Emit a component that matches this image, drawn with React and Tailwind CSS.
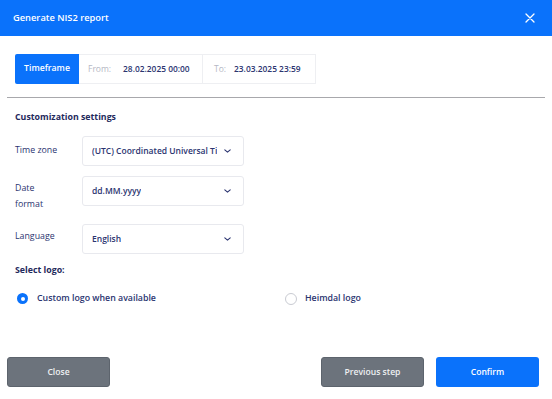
import React from "react";

const Chevron = () => (
  <svg width="7" height="4" viewBox="0 0 7 4" fill="none" className="shrink-0">
    <path d="M0.8 0.8l2.7 2.4 2.7-2.4" stroke="#2b3470" strokeWidth="1.1" strokeLinecap="round" strokeLinejoin="round" />
  </svg>
);

function Select({ value }) {
  return (
    <div className="flex h-[30px] w-[162px] shrink-0 items-center justify-between gap-[5px] rounded-[3px] border border-[#e8e9ee] bg-white pl-[9px] pr-[12px]">
      <span className="min-w-0 overflow-hidden whitespace-nowrap text-[8.5px] font-semibold text-[#2b3470]">{value}</span>
      <Chevron />
    </div>
  );
}

export default function App() {
  return (
    <div className="flex h-[399px] w-[552px] flex-col bg-white" style={{ fontFamily: '"Open Sans", sans-serif' }}>
      <div className="flex h-[36px] items-center justify-between bg-[#0a72fb] pl-[13px] pr-[17px]">
        <span className="text-[9.3px] font-semibold text-white">Generate NIS2 report</span>
        <svg width="10" height="10" viewBox="0 0 10 10">
          <path d="M1 1l8 8M9 1l-8 8" stroke="white" strokeWidth="1.3" strokeLinecap="round" />
        </svg>
      </div>

      <div className="flex flex-col px-[7px]">
        <div className="flex h-[61px] items-center pl-[8px] pt-[5px]">
          <div className="flex h-[30px]">
            <div className="flex w-[64px] items-center justify-center rounded-l-[2px] bg-[#0a72fb] text-[8.7px] font-semibold text-white">Timeframe</div>
            <div className="flex w-[124px] items-center border-y border-r border-[#eeeff2] pl-[9px]">
              <span className="text-[8.5px] text-[#b5b8c4]">From:</span>
              <span className="ml-[12px] text-[8.4px] font-semibold text-[#2b3470]">28.02.2025 00:00</span>
            </div>
            <div className="flex w-[113px] items-center border-y border-r border-[#eeeff2] pl-[11px]">
              <span className="text-[8.5px] text-[#b5b8c4]">To:</span>
              <span className="ml-[8px] text-[8.4px] font-semibold text-[#2b3470]">23.03.2025 23:59</span>
            </div>
          </div>
        </div>
        <div className="h-px bg-[#a8a8ac]" />
      </div>

      <div className="flex flex-col px-[15px]">
        <div className="mt-[13px] text-[8.8px] font-bold text-[#1f2a5c]">Customization settings</div>

        <div className="mt-[12px] flex h-[30px]">
          <div className="w-[67px] pt-[6px] text-[8.8px] leading-[16px] text-[#2b3470]">Time zone</div>
          <Select value="(UTC) Coordinated Universal Ti" />
        </div>

        <div className="mt-[10px] flex h-[30px]">
          <div className="w-[67px] pt-[4px] text-[8.8px] leading-[16px] text-[#2b3470]">Date<br />format</div>
          <Select value="dd.MM.yyyy" />
        </div>

        <div className="mt-[18px] flex h-[30px]">
          <div className="w-[67px] pt-[4px] text-[8.8px] leading-[16px] text-[#2b3470]">Language</div>
          <Select value="English" />
        </div>

        <div className="mt-[10px] text-[8.8px] font-bold text-[#1f2a5c]">Select logo:</div>

        <div className="mt-[15px] flex items-center">
          <div className="flex w-[270px] items-center pl-[2px]">
            <div className="flex h-[11px] w-[11px] items-center justify-center rounded-full bg-[#0a72fb]">
              <div className="h-[4px] w-[4px] rounded-full bg-white" />
            </div>
            <span className="ml-[9px] text-[8.8px] font-semibold text-[#2b3470]">Custom logo when available</span>
          </div>
          <div className="flex items-center">
            <div className="h-[12px] w-[12px] rounded-full border border-[#c9cbd2] bg-white" />
            <span className="ml-[8px] text-[8.8px] font-semibold text-[#2b3470]">Heimdal logo</span>
          </div>
        </div>
      </div>

      <div className="mt-auto mb-[12px] flex items-center justify-between px-[7px]">
        <button className="flex h-[30px] w-[103px] items-center justify-center rounded-[3px] border border-[#5d646d] bg-[#6c737c] text-[8.6px] font-semibold text-[#eef0f2]">Close</button>
        <div className="flex gap-[12px] pr-[6px]">
          <button className="flex h-[30px] w-[103px] items-center justify-center rounded-[3px] border border-[#5d646d] bg-[#6c737c] text-[8.6px] font-semibold text-[#eef0f2]">Previous step</button>
          <button className="flex h-[30px] w-[103px] items-center justify-center rounded-[3px] bg-[#0a72fb] text-[8.6px] font-semibold text-white">Confirm</button>
        </div>
      </div>
    </div>
  );
}
